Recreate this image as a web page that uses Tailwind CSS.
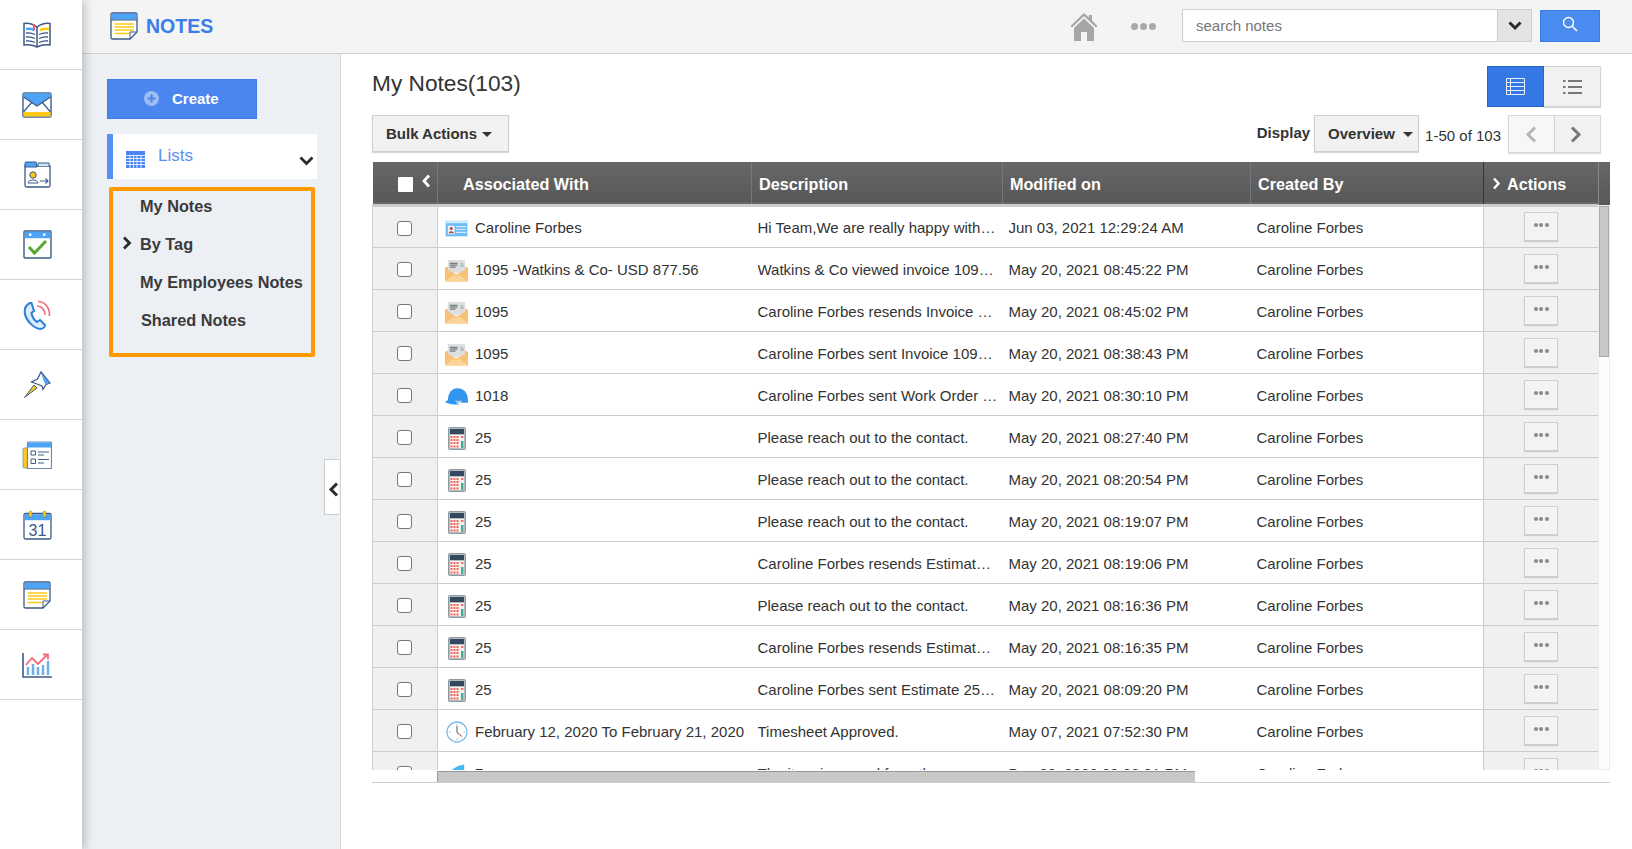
<!DOCTYPE html>
<html lang="en">
<head>
    <meta charset="UTF-8" />
    <title>Notes</title>
    <script src="https://cdn.jsdelivr.net/npm/@tailwindcss/browser@4"></script>
</head>
<body class="bg-white h-screen overflow-hidden font-['Liberation_Sans',Arial,sans-serif] text-[#333] text-[15px]">
<div class="flex h-[849px]">

    <!-- app rail -->
    <nav class="w-[82px] shrink-0 bg-white relative z-10 shadow-[4px_0_8px_rgba(0,0,0,0.18)]">
        <a class="h-[70px] pr-[8px] border-b border-[#d4d4d4] flex items-center justify-center">
            <svg width="30" height="26" viewBox="0 0 30 26" fill="none">
                <path d="M15 5C11 2 6 1 2 1.500V23C6 22.500 11 23 15 25C19 23 24 22.500 28 23V1.500C24 1 19 2 15 5Z" fill="#fff" stroke="#3c5a87" stroke-width="1.500"/>
                <path d="M15 5V25" stroke="#3c5a87" stroke-width="1.500"/>
                <path d="M4 7C7 6.500 10 7 12.500 8" stroke="#4da3f5" stroke-width="2.500"/>
                <path d="M18 8C21 7 24 6.500 27 7" stroke="#ffc917" stroke-width="2.500"/>
                <path d="M4 11C7 10.500 10 11 13 12.500M4 15C7 14.500 10 15 13 16.500M4 19C7 18.500 10 19 13 20.500M17 12.500C20 11 23 10.500 26 11M17 16.500C20 15 23 14.500 26 15M17 20.500C20 19 23 18.500 26 19" stroke="#3c5a87" stroke-width="1.300"/>
                <path d="M12 2V8" stroke="#f25c6e" stroke-width="2"/>
            </svg>
        </a>
        <a class="h-[70px] pr-[8px] border-b border-[#d4d4d4] flex items-center justify-center">
            <svg width="30" height="26" viewBox="0 0 30 26" fill="none">
                <rect x="1" y="1" width="28" height="24" rx="1.500" fill="#fff" stroke="#4a6a98" stroke-width="1.500"/>
                <path d="M1.500 1.500H28.500V5L15 14L1.500 5Z" fill="#4da3f5"/>
                <path d="M1.500 5L15 14L28.500 5M1.500 20L10 10M28.500 20L20 10" stroke="#3c5a87" stroke-width="1.200"/>
                <rect x="1.500" y="20" width="27" height="4.500" fill="#ffc917"/>
            </svg>
        </a>
        <a class="h-[70px] pr-[8px] border-b border-[#d4d4d4] flex items-center justify-center">
            <svg width="27" height="27" viewBox="0 0 27 27" fill="none">
                <path d="M1 5V24.500C1 25.500 1.500 26 2.500 26H24.500C25.500 26 26 25.500 26 24.500V5Z" fill="#fff" stroke="#3c5a87" stroke-width="1.300"/>
                <path d="M1 6V2C1 1.500 1.500 1 2 1H12L13 6Z" fill="#4da3f5" stroke="#3c5a87" stroke-width="1"/>
                <path d="M14 5V2H25V5" fill="#cfe5fb" stroke="#3c5a87" stroke-width="1"/>
                <circle cx="9" cy="14" r="3.200" fill="#ffc917" stroke="#3c5a87"/>
                <path d="M4 22C4 18 14 18 14 22Z" fill="#fff" stroke="#3c5a87"/>
                <path d="M16 20H24M21.500 17.500L24 20L21.500 22.500" stroke="#3c5a87" stroke-width="1.100"/>
            </svg>
        </a>
        <a class="h-[70px] pr-[8px] border-b border-[#d4d4d4] flex items-center justify-center">
            <svg width="29" height="29" viewBox="0 0 29 29" fill="none">
                <rect x="1" y="1" width="27" height="27" rx="1" fill="#fff" stroke="#3c5a87" stroke-width="1.400"/>
                <rect x="1.700" y="1.700" width="25.600" height="6.500" fill="#4da3f5"/>
                <rect x="6" y="3.500" width="2.400" height="2.400" fill="#fff"/>
                <rect x="20" y="3.500" width="2.400" height="2.400" fill="#fff"/>
                <path d="M6 17L11.500 23L23 11" stroke="#5aa532" stroke-width="3"/>
            </svg>
        </a>
        <a class="h-[70px] pr-[8px] border-b border-[#d4d4d4] flex items-center justify-center">
            <svg width="28" height="30" viewBox="0 0 28 30" fill="none">
                <path d="M7 3C3 5 1 9 2 14C3 20 10 28 17 29C20 29 22 27 22 25L17 20L14 22C11 20 9 16 8.500 13L11 11L8.500 3Z" fill="#dcecfb" stroke="#2f7fd8" stroke-width="2"/>
                <path d="M14 6C19 6 22 10 22 15M15 1.500C22 1.500 27 8 26.500 16" stroke="#f2697c" stroke-width="1.600"/>
            </svg>
        </a>
        <a class="h-[70px] pr-[8px] border-b border-[#d4d4d4] flex items-center justify-center">
            <svg width="28" height="28" viewBox="0 0 28 28" fill="none">
                <path d="M18 1L27 12L23 13.500L20 18.500L19 15L14 13L8.500 11L14.500 8Z" fill="#fff" stroke="#3c5a87" stroke-width="1.300"/>
                <path d="M18 2L26.500 12L22 13Z" fill="#4da3f5"/>
                <path d="M11 14L1.500 26.500L14 17Z" fill="#ffc917" stroke="#3c5a87" stroke-width="1"/>
            </svg>
        </a>
        <a class="h-[70px] pr-[8px] border-b border-[#d4d4d4] flex items-center justify-center">
            <svg width="30" height="28" viewBox="0 0 30 28" fill="none">
                <rect x="1" y="7" width="6" height="20" rx="1" fill="#ffc917" stroke="#8aa0c0"/>
                <rect x="5.500" y="1" width="24" height="26.500" rx="1" fill="#fff" stroke="#6b88b0" stroke-width="1.200"/>
                <rect x="6" y="1.500" width="23" height="5" fill="#4da3f5"/>
                <path d="M9 10H13.500V14H9ZM9 18H13.500V22.500H9Z" stroke="#3c5a87"/>
                <path d="M16 11H27M16 14H22M16 18.500H27M16 22H22" stroke="#3c5a87" stroke-width="1.100"/>
            </svg>
        </a>
        <a class="h-[70px] pr-[8px] border-b border-[#d4d4d4] flex items-center justify-center">
            <svg width="29" height="30" viewBox="0 0 29 30" fill="none">
                <rect x="1" y="3.500" width="27" height="25.500" rx="1.500" fill="#fff" stroke="#3c5a87" stroke-width="1.300"/>
                <rect x="1.700" y="4.200" width="25.600" height="6" fill="#4da3f5"/>
                <rect x="6" y="1" width="3" height="6" rx="1.500" fill="#ffc917" stroke="#8a7a30" stroke-width="0.500"/>
                <rect x="20" y="1" width="3" height="6" rx="1.500" fill="#ffc917" stroke="#8a7a30" stroke-width="0.500"/>
                <text x="14.500" y="26" text-anchor="middle" font-size="16" fill="#3c5a87" font-family="Liberation Sans">31</text>
            </svg>
        </a>
        <a class="h-[70px] pr-[8px] border-b border-[#d4d4d4] flex items-center justify-center">
            <svg width="28" height="28" viewBox="0 0 28 28" fill="none">
                <path d="M1 2.500C1 1.500 1.500 1 2.500 1H25.500C26.500 1 27 1.500 27 2.500V20L20 27H2.500C1.500 27 1 26.500 1 25.500Z" fill="#fff" stroke="#3c5a87" stroke-width="1.300"/>
                <rect x="1.700" y="1.700" width="24.600" height="6" fill="#4da3f5"/>
                <path d="M1 8H27" stroke="#3c5a87" stroke-width="1"/>
                <path d="M4.500 12H24M4.500 15H24M4.500 18H24M4.500 21.500H19" stroke="#ffc917" stroke-width="1.500"/>
                <path d="M20 27V20H27" stroke="#3c5a87" stroke-width="1"/>
            </svg>
        </a>
        <a class="h-[70px] pr-[8px] border-b border-[#d4d4d4] flex items-center justify-center">
            <svg width="30" height="26" viewBox="0 0 30 26" fill="none">
                <path d="M1 1V25H30" stroke="#3c5a87" stroke-width="1.600"/>
                <path d="M6 23V15M11 23V12M16 23V15M21 23V13M26 23V9" stroke="#6cb0ee" stroke-width="2.500"/>
                <path d="M4 13L10 6L16 12L25 3M21 2.500H26V7.500" stroke="#f2697c" stroke-width="1.800"/>
            </svg>
        </a>
    </nav>

    <div class="flex-1 min-w-0 flex flex-col">
        <!-- top bar -->
        <header class="h-[54px] shrink-0 bg-[#f4f4f4] border-b border-[#cfcfcf] flex items-center">
            <svg class="ml-[28px] mb-[2px]" width="28" height="28" viewBox="0 0 28 28" fill="none">
                <path d="M1 2.500C1 1.500 1.500 1 2.500 1H25.500C26.500 1 27 1.500 27 2.500V20L20 27H2.500C1.500 27 1 26.500 1 25.500Z" fill="#fff" stroke="#3c5a87" stroke-width="1.300"/>
                <rect x="1.700" y="1.700" width="24.600" height="6" fill="#4da3f5"/>
                <path d="M1 8H27" stroke="#3c5a87" stroke-width="1"/>
                <path d="M4.500 12H24M4.500 15H24M4.500 18H24M4.500 21.500H19" stroke="#ffc917" stroke-width="1.500"/>
                <path d="M20 27V20H27" stroke="#3c5a87" stroke-width="1"/>
            </svg>
            <span class="ml-[8px] text-[19.5px] font-bold text-[#3a7de8] mt-[1px]">NOTES</span>

            <svg class="ml-auto" width="28" height="30" viewBox="0 0 28 30">
                <path d="M14 1L0.500 14L2 15.500L14 4L26 15.500L27.500 14L22 8.500V3H19V5.500Z" fill="#a6a6a6"/>
                <path d="M14 6.500L4 16V29H11V20H17V29H24V16Z" fill="#a6a6a6"/>
            </svg>
            <span class="ml-[33px] flex gap-[2px]">
                <span class="w-[7px] h-[7px] rounded-full bg-[#a9a9a9]"></span>
                <span class="w-[7px] h-[7px] rounded-full bg-[#a9a9a9]"></span>
                <span class="w-[7px] h-[7px] rounded-full bg-[#a9a9a9]"></span>
            </span>
            <div class="ml-[26px] mb-[2px] flex h-[33px] w-[350px] border border-[#cfcfcf] bg-white">
                <input class="flex-1 min-w-0 px-[13px] pt-[1px] text-[15px] outline-none placeholder:text-[#777]" placeholder="search notes" />
                <span class="w-[34px] bg-[#e4e4e4] border-l border-[#cfcfcf] flex items-center justify-center">
                    <svg width="14" height="10" viewBox="0 0 14 10" fill="none"><path d="M1.500 1.500L7 7L12.500 1.500" stroke="#2b2b2b" stroke-width="3"/></svg>
                </span>
            </div>
            <button class="ml-[8px] mr-[32px] mb-[2px] w-[60px] h-[32px] bg-[#4a8bf0] border border-[#3a7de8] flex items-center justify-center">
                <svg class="mb-[3px]" width="16" height="16" viewBox="0 0 16 16" fill="none"><circle cx="6.500" cy="6.500" r="5" stroke="#fff" stroke-width="1.400"/><path d="M10.500 10.500L15 15" stroke="#fff" stroke-width="1.600"/></svg>
            </button>
        </header>

        <div class="flex-1 min-h-0 flex">
            <!-- sidebar -->
            <aside class="w-[259px] shrink-0 bg-[#eceff4] border-r border-[#d6d6d6] pt-[25px] pl-[25px] relative">
                <button class="w-[150px] h-[40px] bg-[#4a86ee] border border-[#3f7be6] text-white font-bold text-[15px] flex items-center">
                    <span class="ml-[36px] mb-[2px] w-[15px] h-[15px] rounded-full bg-[#9dbdf5] text-[#4a86ee] flex items-center justify-center">
                        <svg width="9" height="9" viewBox="0 0 9 9" fill="none"><path d="M4.500 0.500V8.500M0.500 4.500H8.500" stroke="#4a86ee" stroke-width="2"/></svg>
                    </span>
                    <span class="ml-[13px] pt-[1px]">Create</span>
                </button>

                <div class="mt-[15px] w-[210px] h-[45px] bg-white border-l-[6px] border-[#5590f5] flex items-center">
                    <svg class="ml-[13px] mt-[6px]" width="19" height="17" viewBox="0 0 19 17">
                        <rect width="19" height="17" fill="#4a86ee"/>
                        <path d="M0 4.500H19M0 7.500H19M0 10.500H19M0 13.500H19M4 4V17M7.500 4V17M11 4V17M15 4V17" stroke="#fff" stroke-width="0.800"/>
                    </svg>
                    <span class="ml-[13px] text-[17px] text-[#5b8ff0] mb-[2px]">Lists</span>
                    <svg class="ml-auto mr-[3px] mt-[8px]" width="15" height="10" viewBox="0 0 15 10" fill="none"><path d="M1.500 1.500L7.500 7.500L13.500 1.500" stroke="#2b2b2b" stroke-width="2.800"/></svg>
                </div>

                <div class="mt-[8px] ml-[2px] w-[206px] h-[170px] border-[4px] border-[#ff9900] rounded-[2px] text-[16.3px] font-bold text-[#3a3a3a]">
                    <ul class="mt-[-4px]">
                        <li class="h-[38px] pl-[27px] flex items-center">My Notes</li>
                        <li class="h-[38px] pl-[27px] flex items-center relative">
                            <svg class="absolute left-[9px] top-[11px]" width="10" height="14" viewBox="0 0 10 14" fill="none"><path d="M2 1.500L7.500 7L2 12.500" stroke="#2b2b2b" stroke-width="2.800"/></svg>
                            By Tag
                        </li>
                        <li class="h-[38px] pl-[27px] flex items-center">My Employees Notes</li>
                        <li class="h-[38px] pl-[28px] flex items-center">Shared Notes</li>
                    </ul>
                </div>

                <!-- collapse tab sits over the sidebar edge -->
                <span class="absolute left-[242px] top-[405px] w-[15px] h-[56px] bg-white border border-r-0 border-[#ccc] flex items-center justify-end pt-[5px]">
                    <svg width="11" height="15" viewBox="0 0 11 15" fill="none"><path d="M9 1.500L3 7.500L9 13.500" stroke="#2b2b2b" stroke-width="3"/></svg>
                </span>
            </aside>

            <!-- content -->
            <main class="flex-1 min-w-0 pl-[31px] pr-[22px] pt-[12px]">
                <div class="flex justify-between pr-[9px] h-[41px]">
                    <h1 class="text-[22.7px] leading-[34px] text-[#333]">My Notes(103)</h1>
                    <div class="flex h-[41px]">
                        <span class="w-[57px] bg-[#3478e5] border border-[#2a66c8] flex items-center justify-center">
                            <svg width="19" height="17" viewBox="0 0 19 17" fill="none"><path d="M0.500 0.500H18.500V16.500H0.500ZM0.500 4.500H18.500M0.500 8.500H18.500M0.500 12.500H18.500M4.500 0.500V16.500" stroke="#fff" stroke-opacity="0.900"/></svg>
                        </span>
                        <span class="w-[57px] bg-[#f1f1f1] border border-[#d4d4d4] border-l-0 shadow-[0_1px_1px_rgba(0,0,0,0.15)] flex items-center justify-center">
                            <svg width="19" height="16" viewBox="0 0 19 16" fill="none"><path d="M0 2H2.500M5 2H19M0 8H2.500M5 8H19M0 14H2.500M5 14H19" stroke="#777" stroke-width="2"/></svg>
                        </span>
                    </div>
                </div>

                <div class="mt-[8px] flex items-start pr-[9px] h-[38px]">
                    <button class="w-[137px] h-[37px] pl-[13px] pt-[2px] bg-[#f1f1f1] border border-[#cfcfcf] shadow-[0_1px_1px_rgba(0,0,0,0.15)] font-bold text-[15px] flex items-center gap-[5px]">
                        Bulk Actions
                        <span class="w-0 h-0 border-x-[5px] border-x-transparent border-t-[5px] border-t-[#333]"></span>
                    </button>
                    <span class="ml-auto font-bold text-[15px] mt-[7px]">Display</span>
                    <button class="ml-[4px] w-[105px] h-[37px] pl-[13px] pt-[2px] bg-[#f1f1f1] border border-[#cfcfcf] shadow-[0_1px_1px_rgba(0,0,0,0.15)] font-bold text-[15px] flex items-center gap-[8px]">
                        Overview
                        <span class="w-0 h-0 border-x-[5px] border-x-transparent border-t-[5px] border-t-[#333]"></span>
                    </button>
                    <span class="ml-[6px] mt-[10px] text-[15px]">1-50 of 103</span>
                    <div class="ml-[7px] flex h-[38px] border border-[#d8d8d8] shadow-[0_1px_1px_rgba(0,0,0,0.12)]">
                        <span class="w-[45px] pr-[2px] bg-[#f7f7f7] flex items-center justify-center">
                            <svg width="12" height="17" viewBox="0 0 12 17" fill="none"><path d="M10 1.500L3 8.500L10 15.500" stroke="#b5b5b5" stroke-width="3"/></svg>
                        </span>
                        <span class="w-[46px] pr-[3px] bg-[#f1f1f1] border-l border-[#cfcfcf] flex items-center justify-center">
                            <svg width="12" height="17" viewBox="0 0 12 17" fill="none"><path d="M2 1.500L9 8.500L2 15.500" stroke="#777" stroke-width="3"/></svg>
                        </span>
                    </div>
                </div>

                <!-- grid, clipped by its own scrollers -->
                <div class="mt-[9px] flex h-[608px] overflow-hidden">
                    <div class="w-[1226px] shrink-0">
                        <table class="w-[1226px] table-fixed border-collapse">
                            <colgroup>
                                <col class="w-[65px]"><col class="w-[314px]"><col class="w-[251px]"><col class="w-[248px]"><col class="w-[233px]"><col class="w-[115px]">
                            </colgroup>
                            <thead>
                                <tr class="h-[43px] bg-gradient-to-b from-[#676767] to-[#585858] text-white text-[16.2px] font-bold text-left border-b-[3px] border-[#ccc]">
                                    <th class="p-0 pt-[3px] border-r border-[#777]">
                                        <div class="flex items-center pl-[25px]">
                                            <span class="w-[15px] h-[15px] bg-white rounded-[1px]"></span>
                                            <svg class="ml-[8px] mb-[6px]" width="10" height="14" viewBox="0 0 10 14" fill="none"><path d="M8 1.500L3 7L8 12.500" stroke="#fff" stroke-width="2.800"/></svg>
                                        </div>
                                    </th>
                                    <th class="p-0 pt-[2px] pl-[25px] border-r border-[#777]">Associated With</th>
                                    <th class="p-0 pt-[2px] pl-[7px] border-r border-[#777]">Description</th>
                                    <th class="p-0 pt-[2px] pl-[7px] border-r border-[#777]">Modified on</th>
                                    <th class="p-0 pt-[2px] pl-[7px] border-r border-[#333]">Created By</th>
                                    <th class="p-0 pt-[2px] pl-[8px]">
                                        <div class="flex items-center gap-[6px]">
                                            <svg width="9" height="13" viewBox="0 0 9 13" fill="none"><path d="M2 1.500L6.500 6.500L2 11.500" stroke="#fff" stroke-width="2.500"/></svg>
                                            Actions
                                        </div>
                                    </th>
                                </tr>
                            </thead>
                            <tbody id="notas-body" class="text-[15px] text-[#333]"></tbody>
                        </table>
                    </div>
                    <!-- vertical scroller -->
                    <div class="w-[12px] shrink-0 flex flex-col">
                        <div class="h-[43px] bg-gradient-to-b from-[#676767] to-[#585858] border-l border-[#888]"></div>
                        <div class="flex-1 bg-[#fbfbfb] border border-[#eee]">
                            <div class="h-[151px] bg-[#c8c8c8] border border-[#aaa]"></div>
                        </div>
                    </div>
                </div>
                <!-- horizontal scroller -->
                <div class="mt-[1px] h-[12px] border-b border-[#ccc] pl-[65px]">
                    <div class="w-[758px] h-[11px] bg-[#c8c8c8] border-t border-l border-[#999]"></div>
                </div>
            </main>
        </div>
    </div>
</div>

<script>
    const iconos = {
        tarjeta: `<svg width="24" height="17" viewBox="0 0 24 17"><rect width="24" height="17" fill="#cfe9fd"/><rect x="1" y="3" width="22" height="13.500" fill="#6cbcf7"/><rect x="3" y="5.500" width="7" height="9" fill="#eaf5fe"/><circle cx="6.500" cy="8.500" r="1.600" fill="#b5493c"/><path d="M3.800 13.500C3.800 10.500 9.200 10.500 9.200 13.500Z" fill="#b5493c"/><path d="M11.500 6.500H22M11.500 9.500H22M11.500 12.500H22" stroke="#d7eefd" stroke-width="1.200"/></svg>`,
        sobre: `<svg width="24" height="23" viewBox="0 0 24 23"><path d="M3 0.500H21V14H3Z" fill="#dedede"/><path d="M5 4H13M5 6H13M5 8H11" stroke="#6f7a80" stroke-width="1.300"/><text x="16" y="8" font-size="7" fill="#6aa69b" font-family="Liberation Serif">$</text><path d="M0 9L3 7V12L12 16L21 12V7L24 9V23H0Z" fill="#f8c173"/><path d="M0 23L10 15H14L24 23Z" fill="#fbd49a"/><path d="M0 9L12 17L24 9" fill="none" stroke="#f6b45c" stroke-width="0.800"/></svg>`,
        casco: `<svg width="24" height="19" viewBox="0 0 24 19"><path d="M3 14C3 6 7 1 13 1C19 1 24 5 24 14V16H3Z" fill="#3295ee"/><path d="M0 15.500C2 14 3 13 4 13L14 16V18C8 18 3 17 0 15.500Z" fill="#3295ee"/><path d="M11 14L18 16.500M12 17L17 14" stroke="#cfe0ee" stroke-width="1.200"/></svg>`,
        calc: `<svg width="18" height="23" viewBox="0 0 18 23"><rect x="0.500" y="0.500" width="17" height="22" rx="1" fill="#b4bcc2" stroke="#8f9aa2"/><rect x="2" y="2" width="14" height="5" fill="#34495e"/><rect x="2" y="8" width="14" height="13" fill="#fdf1ee"/><path d="M2.500 10H11.500M2.500 13H11.500M2.500 16H11.500M2.500 19.500H11.500" stroke="#e8685e" stroke-width="1.800" stroke-dasharray="2 1"/><rect x="13" y="14" width="2.500" height="7" fill="#3eae97"/><path d="M13 10H15.500" stroke="#e8685e" stroke-width="1.800"/></svg>`,
        reloj: `<svg width="22" height="22" viewBox="0 0 22 22" fill="none"><circle cx="11" cy="11" r="10" fill="#fff" stroke="#7fbcec" stroke-width="1.300"/><path d="M11 3V4.500M11 17.500V19M3 11H4.500M17.500 11H19" stroke="#7fbcec"/><path d="M11 5V11.500L15.500 15" stroke="#555" stroke-width="1"/><path d="M11 11.500L16.500 16" stroke="#e8685e" stroke-width="0.800"/></svg>`,
        item: `<svg width="24" height="22" viewBox="0 0 24 22"><path d="M2 13C6 6 13 2 20 1V22H2Z" fill="#45b8f5"/></svg>`
    };

    const notas = [
        ['tarjeta', 'Caroline Forbes', 'Hi Team,We are really happy with the service', 'Jun 03, 2021 12:29:24 AM'],
        ['sobre', '1095 -Watkins & Co- USD 877.56', 'Watkins & Co viewed invoice 1095 sent by you', 'May 20, 2021 08:45:22 PM'],
        ['sobre', '1095', 'Caroline Forbes resends Invoice 1095 to contact', 'May 20, 2021 08:45:02 PM'],
        ['sobre', '1095', 'Caroline Forbes sent Invoice 1095 to contact', 'May 20, 2021 08:38:43 PM'],
        ['casco', '1018', 'Caroline Forbes sent Work Order 1018 to contact', 'May 20, 2021 08:30:10 PM'],
        ['calc', '25', 'Please reach out to the contact.', 'May 20, 2021 08:27:40 PM'],
        ['calc', '25', 'Please reach out to the contact.', 'May 20, 2021 08:20:54 PM'],
        ['calc', '25', 'Please reach out to the contact.', 'May 20, 2021 08:19:07 PM'],
        ['calc', '25', 'Caroline Forbes resends Estimate 25 to contact', 'May 20, 2021 08:19:06 PM'],
        ['calc', '25', 'Please reach out to the contact.', 'May 20, 2021 08:16:36 PM'],
        ['calc', '25', 'Caroline Forbes resends Estimate 25 to contact', 'May 20, 2021 08:16:35 PM'],
        ['calc', '25', 'Caroline Forbes sent Estimate 25 to contact', 'May 20, 2021 08:09:20 PM'],
        ['reloj', 'February 12, 2020 To February 21, 2020', 'Timesheet Approved.', 'May 07, 2021 07:52:30 PM'],
        ['item', '7', 'The item is moved from the', 'Dec 09, 2020 09:08:01 PM']
    ];

    const tbody = document.getElementById('notas-body');
    notas.forEach(n => {
        const tr = document.createElement('tr');
        tr.className = 'h-[42px] border-b border-[#ccc]';
        tr.innerHTML = `
            <td class="p-0 pt-[3px] bg-[#f0f0f0] border-l border-r border-[#ccc]">
                <span class="block ml-[24px] w-[15px] h-[15px] bg-white border border-[#777] rounded-[3px]"></span>
            </td>
            <td class="p-0 pt-[4px]">
                <div class="flex items-center">
                    <span class="w-[37px] pl-[7px] shrink-0 flex justify-center pr-[7px]">${iconos[n[0]]}</span>
                    <span class="whitespace-nowrap"></span>
                </div>
            </td>
            <td class="p-0 pt-[4px] pl-[6px] pr-[4px]"><div class="truncate"></div></td>
            <td class="p-0 pt-[4px] pl-[6px] whitespace-nowrap">${n[3]}</td>
            <td class="p-0 pt-[4px] pl-[6px] whitespace-nowrap">Caroline Forbes</td>
            <td class="p-0 bg-[#f0f0f0] border-l border-r border-[#ccc]">
                <span class="mx-auto w-[34px] h-[29px] bg-[#f3f3f3] border border-[#cfcfcf] shadow-[0_1px_1px_rgba(0,0,0,0.15)] flex items-center justify-center gap-[1.500px] pb-[3px]">
                    <i class="w-[4px] h-[4px] rounded-full bg-[#8a8a8a]"></i><i class="w-[4px] h-[4px] rounded-full bg-[#8a8a8a]"></i><i class="w-[4px] h-[4px] rounded-full bg-[#8a8a8a]"></i>
                </span>
            </td>`;
        tr.children[1].querySelector('.whitespace-nowrap').textContent = n[1];
        tr.children[2].querySelector('.truncate').textContent = n[2];
        tbody.appendChild(tr);
    });
</script>
</body>
</html>
